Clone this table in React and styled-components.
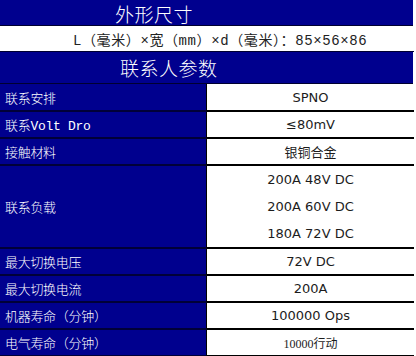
import React from "react";
import { styled, createGlobalStyle } from "styled-components";

const SPECS = [
  { id: 0, label: "联系安排", values: ["SPNO"] },
  { id: 1, label: "联系Volt Dro", values: ["≤80mV"] },
  { id: 2, label: "接触材料", values: ["银铜合金"] },
  { id: 3, label: "联系负载", values: ["200A 48V DC", "200A 60V DC", "180A 72V DC"] },
  { id: 4, label: "最大切换电压", values: ["72V DC"] },
  { id: 5, label: "最大切换电流", values: ["200A"] },
  { id: 6, label: "机器寿命（分钟）", values: ["100000 Ops"] },
  { id: 7, label: "电气寿命（分钟）", values: ["10000行动"], serif: true },
];

const App = () => {
  return (
    <>
      <GlobalStyle />
      <Sheet>
        <TitleBar $height={26} $indent={115} $shift={2}>
          外形尺寸
        </TitleBar>
        <InfoRow>L（毫米）×宽（mm）×d（毫米）：85×56×86</InfoRow>
        <TitleBar $height={32} $indent={120} $shift={0}>
          联系人参数
        </TitleBar>
        <SpecTable>
          {SPECS.map(({ id, label, values, serif }) => (
            <React.Fragment key={id}>
              <LabelCell $first={id === 0}>{label}</LabelCell>
              <ValueCell $first={id === 0} $serif={serif}>
                {values.map((v) => (
                  <ValueLine key={v} $tall={values.length > 1}>
                    {v}
                  </ValueLine>
                ))}
              </ValueCell>
            </React.Fragment>
          ))}
        </SpecTable>
      </Sheet>
    </>
  );
};

export default App;

const GlobalStyle = createGlobalStyle`
  body {
    margin: 0;
    background: #ffffff;
  }
`;

const Sheet = styled.div`
  display: flex;
  flex-direction: column;
  width: 414px;
`;

const TitleBar = styled.div`
  display: flex;
  align-items: center;
  height: ${({ $height }) => $height}px;
  padding-left: ${({ $indent }) => $indent}px;
  padding-top: ${({ $shift }) => $shift}px;
  width: 413px;
  background: #00008e;
  border-bottom: 1px solid #000030;
  color: #ffffff;
  font-family: "Noto Sans CJK SC", sans-serif;
  font-weight: 300;
  font-size: 19px;
  letter-spacing: 0.5px;
  line-height: 24px;
  box-sizing: border-box;
`;

const InfoRow = styled.div`
  display: flex;
  align-items: center;
  height: 25px;
  padding-left: 73px;
  background: #ffffff;
  border-bottom: 1px solid #000030;
  color: #222222;
  font-family: "Liberation Mono", "Noto Sans CJK SC", monospace;
  font-size: 14px;
  letter-spacing: 0.6px;
  white-space: nowrap;
`;

const SpecTable = styled.div`
  display: grid;
  grid-template-columns: 207px 207px;
`;

const LabelCell = styled.div`
  display: flex;
  align-items: center;
  padding-left: 5px;
  background: #00008e;
  border-right: 1px solid #000000;
  border-bottom: 2px solid #000038;
  color: #ffffff;
  font-family: "Liberation Mono", "Noto Sans CJK SC", monospace;
  font-weight: 300;
  font-size: 13px;
  letter-spacing: -0.3px;
  min-height: ${({ $first }) => ($first ? 26 : 25)}px;
`;

const ValueCell = styled.div`
  display: flex;
  flex-direction: column;
  justify-content: center;
  align-items: center;
  background: #ffffff;
  border-bottom: 2px solid #000000;
  color: #1c1c1c;
  font-family: ${({ $serif }) =>
    $serif
      ? `"Liberation Serif", "Noto Sans CJK SC", serif`
      : `"DejaVu Sans", "Noto Sans CJK SC", sans-serif`};
  font-size: ${({ $serif }) => ($serif ? 12 : 13)}px;
  min-height: ${({ $first }) => ($first ? 26 : 25)}px;
`;

const ValueLine = styled.div`
  height: ${({ $tall }) => ($tall ? 27 : 25)}px;
  display: flex;
  align-items: center;
`;
